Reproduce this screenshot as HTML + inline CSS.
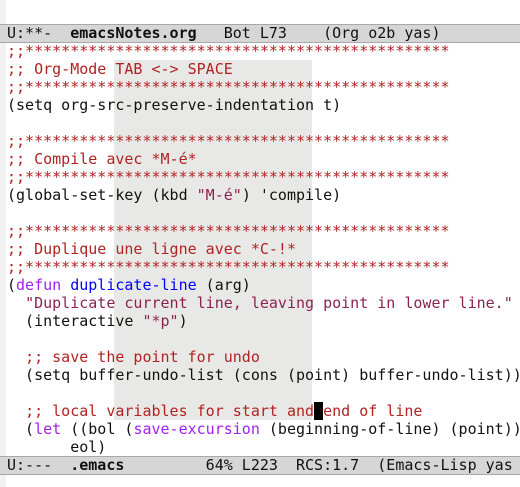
<!DOCTYPE html>
<html><head><meta charset="utf-8"><style>
body{margin:0;width:520px;height:487px;background:#fff;position:relative;overflow:hidden;font-family:"DejaVu Sans Mono","Liberation Mono",monospace;font-size:15px;}
.fr{position:absolute;left:0;top:0;width:6px;height:487px;background:#f2f2f2}
.ml{position:absolute;left:0;width:520px;height:17px;background:#d6d6d6;border-top:1px solid #a8a8a8;border-bottom:1px solid #a8a8a8;line-height:17px;white-space:pre;padding-left:7px;box-sizing:content-box;color:#111}
.hl{position:absolute;left:114px;top:60px;width:198px;height:360px;background:#e8e8e6}
.txt{position:absolute;left:7px;top:42px;white-space:pre;line-height:18px;color:#111}
.c{color:#b22222}.s{color:#8b2252}.k{color:#a020f0}.f{color:#0000ff}
.cur{background:#000;color:#fff}
b{font-weight:bold}
</style></head><body>
<div class="fr"></div>
<div class="ml" style="top:24px">U:**-  <b>emacsNotes.org</b>   Bot L73    (Org o2b yas)</div>
<div class="hl"></div>
<div class="txt"><span class="c">;;***********************************************
;; Org-Mode TAB &lt;-&gt; SPACE
;;***********************************************</span>
(setq org-src-preserve-indentation t)

<span class="c">;;***********************************************
;; Compile avec *M-é*
;;***********************************************</span>
(global-set-key (kbd <span class="s">"M-é"</span>) 'compile)

<span class="c">;;***********************************************
;; Duplique une ligne avec *C-!*
;;***********************************************</span>
(<span class="k">defun</span> <span class="f">duplicate-line</span> (arg)
  <span class="s">"Duplicate current line, leaving point in lower line."</span>
  (interactive <span class="s">"*p"</span>)

  <span class="c">;; save the point for undo</span>
  (setq buffer-undo-list (cons (point) buffer-undo-list))

  <span class="c">;; local variables for start and<span class="cur"> </span>end of line</span>
  (<span class="k">let</span> ((bol (<span class="k">save-excursion</span> (beginning-of-line) (point)))
       eol)</div>
<div class="ml" style="top:456px">U:---  <b>.emacs</b>         64% L223  RCS:1.7  (Emacs-Lisp yas</div>
</body></html>
